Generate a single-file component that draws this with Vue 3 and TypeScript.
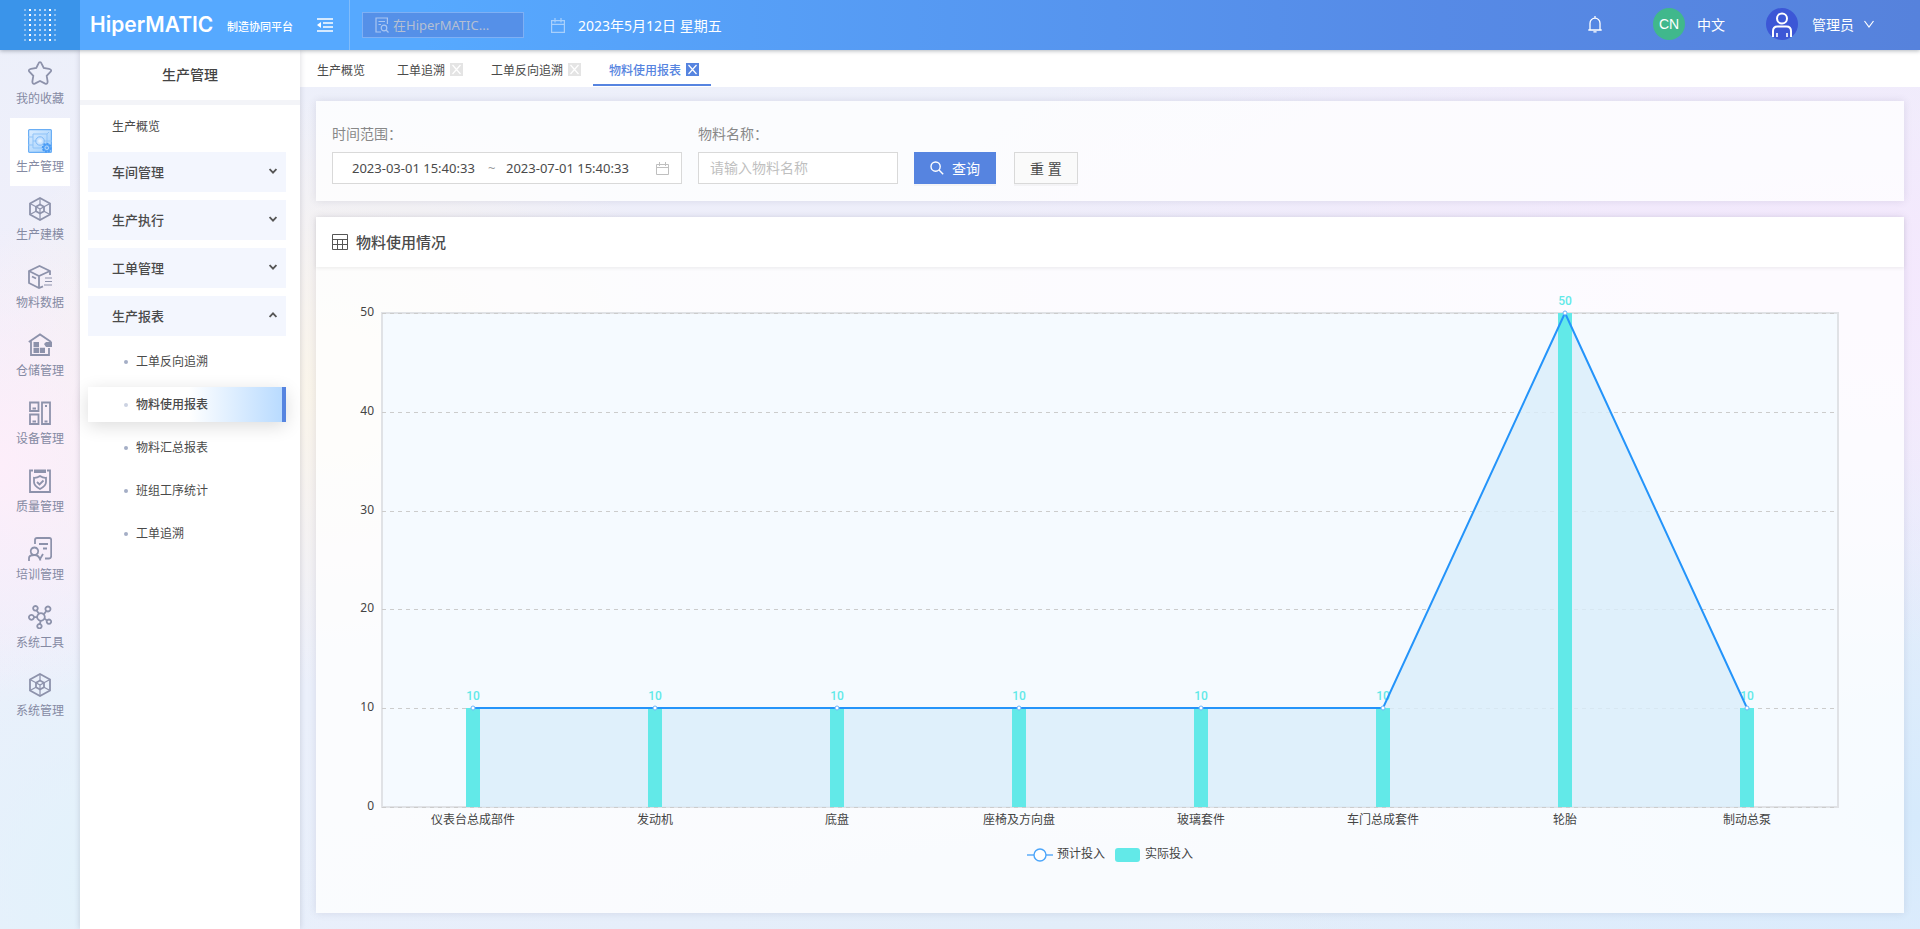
<script setup lang="ts">
import { computed, onBeforeUnmount, onMounted, ref } from 'vue'

interface Stroke {
  d: string
  solid?: boolean
  thin?: boolean
}

interface RailItem {
  label: string
  icon: Stroke[]
}

interface Tab {
  label: string
  closable: boolean
}

const hexCube: Stroke[] = [
  { d: 'M12 1L22 6.5V17.5L12 23L2 17.5V6.5Z' },
  { d: 'M12 7.5L16 9.7V14.3L12 16.5L8 14.3V9.7Z' },
  { d: 'M8 9.7L12 12L16 9.7M12 12V23M12 1V7.5M2 6.5L8 9.7M22 6.5L16 9.7M2 17.5L8 14.3M22 17.5L16 14.3', thin: true },
]

const rail: RailItem[] = [
  { label: '我的收藏', icon: [{ d: 'M12 1.2Q13 1.2 13.6 2.6L15.7 7L21 7.8Q24.4 8.6 22.4 11L18.7 14.8L19.6 20.4Q19.8 23.4 17.2 22.6L12 20L6.8 22.6Q4.2 23.4 4.4 20.4L5.3 14.8L1.6 11Q-.4 8.6 3 7.8L8.3 7L10.4 2.6Q11 1.2 12 1.2Z' }] },
  { label: '生产管理', icon: [] },
  { label: '生产建模', icon: hexCube },
  {
    label: '物料数据',
    icon: [
      { d: 'M15 21.4L11 23L1 18V6L11.5 1L22 6V10' },
      { d: 'M1 6L11 11L22 6M11 11V23M4 11.5L8 13.5' },
      { d: 'M17 13H24M17 16.5H24M16 20H24', thin: true },
    ],
  },
  {
    label: '仓储管理',
    icon: [
      { d: 'M.8 9L12 1.4L23.2 9M3 8V22H21V15' },
      { d: 'M5.5 9H11V14H5.5ZM5.5 14.8H11V20H5.5ZM11.8 14.8H17V20H11.8ZM16 11L18 9H24V14H18Z', solid: true },
    ],
  },
  { label: '设备管理', icon: [{ d: 'M2 1.5H10.5V10H2ZM2 13.5H10.5V23H2ZM14 1.5H22V23H14ZM4.5 7.5H8M4.5 20.5H8M16.5 20.5H19.5M17 5H19' }] },
  {
    label: '质量管理',
    icon: [
      { d: 'M5 1.5H2V23H22V1.5H19' },
      { d: 'M6 .5H18V4H6Z', solid: true },
      { d: 'M12 7Q15 9 18 8.8V13Q18 17 12 20Q6 17 6 13V8.8Q9 9 12 7ZM9 13L11.5 15.5L15.5 11.5' },
    ],
  },
  {
    label: '培训管理',
    icon: [
      { d: 'M7 7V3Q7 1 9 1H21.5Q23.2 1 23.2 3V19Q23.2 21.5 21 21.5H17' },
      { d: 'M11 7H20M15 11.5H19M6.5 10.5A3.8 3.8 0 1 1 6.4 10.5ZM1 24V21Q1 18 6.5 18Q11 18 12.5 23.5M12 22L15 17' },
    ],
  },
  {
    label: '系统工具',
    icon: [
      { d: 'M13 8.2A3.8 3.8 0 1 1 12.9 8.2ZM7.5 1A2.3 2.3 0 1 1 7.4 1ZM20 1.5A2.5 2.5 0 1 1 19.9 1.5ZM3.5 9.8A2.5 2.5 0 1 1 3.4 9.8ZM21 14.5A2.2 2.2 0 1 1 20.9 14.5ZM11.5 19A2.2 2.2 0 1 1 11.4 19Z' },
      { d: 'M8.5 5.3L11 8.8M18.3 6L15.8 9.4M6 12.2H9.2M16.5 13.6L19 15.5M12.5 15.8L12 19' },
    ],
  },
  { label: '系统管理', icon: hexCube },
]

const groups = ['车间管理', '生产执行', '工单管理', '生产报表']
const reports = ['工单反向追溯', '物料使用报表', '物料汇总报表', '班组工序统计', '工单追溯']
const tabs: Tab[] = [
  { label: '生产概览', closable: false },
  { label: '工单追溯', closable: true },
  { label: '工单反向追溯', closable: true },
  { label: '物料使用报表', closable: true },
]

const activeRail = ref('生产管理')
const openGroup = ref('生产报表')
const activeReport = ref('物料使用报表')
const activeTab = ref('物料使用报表')

const dateFrom = ref('2023-03-01 15:40:33')
const dateTo = ref('2023-07-01 15:40:33')
const material = ref('')

function resetFilters(): void {
  material.value = ''
}

const dotColumns = [0.4, 1, 0.6, 0.6, 0.6, 1, 0.4]

const usage = [
  { name: '仪表台总成部件', value: 10 },
  { name: '发动机', value: 10 },
  { name: '底盘', value: 10 },
  { name: '座椅及方向盘', value: 10 },
  { name: '玻璃套件', value: 10 },
  { name: '车门总成套件', value: 10 },
  { name: '轮胎', value: 50 },
  { name: '制动总泵', value: 10 },
]
const ticks = [0, 10, 20, 30, 40, 50]
const maxValue = 50

const chartBox = ref<HTMLElement | null>(null)
const width = ref(1588)
const height = ref(646)
let observer: ResizeObserver | undefined

onMounted(() => {
  if (!chartBox.value) return
  observer = new ResizeObserver(([entry]) => {
    width.value = Math.round(entry.contentRect.width)
    height.value = Math.round(entry.contentRect.height)
  })
  observer.observe(chartBox.value)
})
onBeforeUnmount(() => observer?.disconnect())

const plot = computed(() => ({
  left: 66,
  top: 46,
  right: width.value - 66,
  bottom: height.value - 106,
}))

function yOf(value: number): number {
  const { top, bottom } = plot.value
  return Math.round(bottom - ((bottom - top) * value) / maxValue)
}

const points = computed(() => {
  const { left, right } = plot.value
  const step = (right - left) / usage.length
  return usage.map((u, i) => ({ ...u, x: Math.round(left + step * (i + 0.5)), y: yOf(u.value) }))
})

const linePoints = computed(() => points.value.map((p) => `${p.x},${p.y}`).join(' '))
const areaPoints = computed(() => {
  const first = points.value[0]
  const last = points.value[points.value.length - 1]
  const base = plot.value.bottom
  return `${first.x},${base} ${linePoints.value} ${last.x},${base}`
})
const middle = computed(() => Math.round(width.value / 2))
</script>

<template>
  <div class="app">
    <header class="topbar">
      <div class="brand-mark">
        <svg width="34" height="34" viewBox="0 0 34 34" aria-hidden="true">
          <template v-for="(shade, c) in dotColumns" :key="c">
            <rect v-for="r in 7" :key="r" :x="1 + c * 5" :y="r * 5 - 4" width="2" height="2" fill="#fff" :opacity="shade" />
          </template>
        </svg>
      </div>
      <div class="brand">
        <span class="brand-name">HiperMATIC</span>
        <span class="brand-sub">制造协同平台</span>
      </div>
      <button class="collapse" type="button" aria-label="收起菜单">
        <svg width="16" height="14" viewBox="0 0 16 14" fill="none" stroke="#fff">
          <path d="M0 1H16M6 5H16M6 9H16M0 13H16" stroke-width="1.4" />
          <path d="M4 4V10L0 7Z" fill="#fff" stroke="none" />
        </svg>
      </button>
      <label class="search">
        <svg width="14" height="16" viewBox="0 0 14 16" fill="none" stroke="#a9c6f2" stroke-width="1.2">
          <path d="M12.4 7V1H1V15H6M3.5 4.5H10M3.5 7.5H6" />
          <circle cx="9" cy="11" r="2.8" />
          <path d="M11 13L13.5 15.5" />
        </svg>
        <input type="search" placeholder="在HiperMATIC..." aria-label="搜索" />
      </label>
      <div class="today">
        <svg width="14" height="15" viewBox="0 0 14 15" fill="none" stroke="#a8d0fc" stroke-width="1.2">
          <path d="M.6 2.6H13.4V14.4H.6ZM.6 6.4H13.4M4 0V4.6M10 0V4.6" />
        </svg>
        <span>2023年5月12日 星期五</span>
      </div>
      <div class="account">
        <button class="bell" type="button" aria-label="通知">
          <svg width="14" height="17" viewBox="0 0 14 17" fill="none" stroke="#fff" stroke-width="1.3">
            <path d="M.3 14H13.7M2 14V7.2A5 5 0 0 1 12 7.2V14M7 0V2.2M5.4 15.8H8.6" />
          </svg>
        </button>
        <button class="lang" type="button">
          <span class="lang-badge">CN</span>
          <span>中文</span>
        </button>
        <button class="user" type="button">
          <svg width="32" height="32" viewBox="0 0 32 32" fill="none" stroke="#fff" stroke-width="2">
            <circle cx="16" cy="16" r="16" fill="#3c57d6" stroke="none" />
            <circle cx="16" cy="10.5" r="5" />
            <path d="M7 29V23Q7 18.4 11.5 18.4H20.5Q25 18.4 25 23V29" />
            <path d="M11 25V29M21 25V29" stroke-width="1.6" />
          </svg>
          <span>管理员</span>
          <svg width="10" height="8" viewBox="0 0 10 8" fill="none" stroke="#fff" stroke-width="1.2">
            <path d="M.5 1L5 7L9.5 1" />
          </svg>
        </button>
      </div>
    </header>

    <div class="body">
      <nav class="rail" aria-label="主菜单">
        <a
          v-for="item in rail"
          :key="item.label"
          href="#"
          class="rail-item"
          :class="{ active: item.label === activeRail }"
          @click.prevent="activeRail = item.label"
        >
          <svg v-if="item.icon.length" class="rail-icon" viewBox="0 0 24 24" aria-hidden="true">
            <path v-for="(s, i) in item.icon" :key="i" :d="s.d" :class="{ solid: s.solid, thin: s.thin }" />
          </svg>
          <svg v-else width="24" height="24" viewBox="0 0 24 24" fill="none" aria-hidden="true">
            <defs>
              <linearGradient id="plan" x1="0" y1="0" x2="1" y2="1">
                <stop offset="0" stop-color="#dcedff" />
                <stop offset="1" stop-color="#9ccdfc" />
              </linearGradient>
            </defs>
            <rect x=".6" y=".6" width="22.8" height="22.8" rx="1" fill="url(#plan)" stroke="#6aaef5" stroke-width="1.2" />
            <path d="M5 5H19V19H5ZM0 8H5M0 16H5M5 12H8M16 12H24M19 5L21 3" stroke="#8fc3f8" />
            <circle cx="12" cy="12" r="4.2" fill="#c9e3ff" stroke="#7db8f7" />
            <circle cx="12" cy="12" r="1.8" fill="#e5f2ff" />
            <circle cx="18.8" cy="18.8" r="4" fill="#5ba6f6" stroke="#4a9bf5" stroke-width="2" stroke-dasharray="2 1" />
            <circle cx="18.8" cy="18.8" r="1.8" stroke="#b5d9ff" />
          </svg>
          <span>{{ item.label }}</span>
        </a>
      </nav>

      <aside class="panel">
        <h1 class="panel-title">生产管理</h1>
        <nav class="menu" aria-label="生产管理">
          <a class="menu-link" href="#" @click.prevent>生产概览</a>
          <button
            v-for="g in groups"
            :key="g"
            class="menu-group"
            type="button"
            :aria-expanded="g === openGroup"
            @click="openGroup = g"
          >
            <span>{{ g }}</span>
            <svg width="8" height="6" viewBox="0 0 8 6" fill="none" stroke="#555" stroke-width="1.8">
              <path :d="g === openGroup ? 'M.6 5L4 1.4L7.4 5' : 'M.6 1L4 4.6L7.4 1'" />
            </svg>
          </button>
          <a
            v-for="r in reports"
            :key="r"
            href="#"
            class="menu-leaf"
            :class="{ active: r === activeReport }"
            @click.prevent="activeReport = r"
          >{{ r }}</a>
        </nav>
      </aside>

      <div class="content">
        <div class="tabs">
          <div v-for="t in tabs" :key="t.label" class="tab" :class="{ active: t.label === activeTab, plain: !t.closable }">
            <button class="tab-name" type="button" @click="activeTab = t.label">{{ t.label }}</button>
            <button v-if="t.closable" class="tab-close" type="button" :aria-label="'关闭' + t.label">
              <svg width="13" height="13" viewBox="0 0 13 13" stroke="#fff" stroke-width="1.2"><path d="M2.5 2L10.5 11M10.5 2L2.5 11" /></svg>
            </button>
          </div>
        </div>

        <main class="main">
          <form class="card filters" @submit.prevent>
            <div class="field range">
              <label for="date-from">时间范围：</label>
              <div class="range-box">
                <input id="date-from" v-model="dateFrom" type="text" />
                <span class="tilde">~</span>
                <input v-model="dateTo" type="text" aria-label="结束时间" />
                <svg width="13" height="13" viewBox="0 0 13 13" fill="none" stroke="#bfbfbf">
                  <path d="M.5 2.5H12.5V12.5H.5ZM.5 5.5H12.5M3.5 0V4M9.5 0V4" />
                </svg>
              </div>
            </div>
            <div class="field">
              <label for="material">物料名称：</label>
              <input id="material" v-model="material" class="text-box" type="text" placeholder="请输入物料名称" />
            </div>
            <div class="actions">
              <button class="btn primary" type="submit">
                <svg width="14" height="14" viewBox="0 0 14 14" fill="none" stroke="#fff" stroke-width="1.4">
                  <circle cx="5.6" cy="5.6" r="4.6" /><path d="M9 9L13.2 13.2" />
                </svg>
                <span>查询</span>
              </button>
              <button class="btn" type="button" @click="resetFilters">重 置</button>
            </div>
          </form>

          <section class="card report">
            <h2 class="report-title">
              <svg width="16" height="16" viewBox="0 0 16 16" fill="none" stroke="#555">
                <path d="M.5 .5H15.5V15.5H.5ZM.5 5.5H15.5M.5 10.5H15.5M5.5 5.5V15.5M10.5 5.5V15.5" />
              </svg>
              <span>物料使用情况</span>
            </h2>
            <div ref="chartBox" class="chart-box">
              <svg class="chart" :viewBox="`0 0 ${width} ${height}`" role="img" aria-label="物料使用情况">
                <rect
                  :x="plot.left" :y="plot.top" :width="plot.right - plot.left" :height="plot.bottom - plot.top"
                  fill="#f5faff" stroke="#e0e2e6" stroke-width="2"
                />
                <g v-for="t in ticks" :key="t">
                  <line :x1="plot.left" :x2="plot.right" :y1="yOf(t) + 0.5" :y2="yOf(t) + 0.5" class="grid" />
                  <text :x="plot.left - 8" :y="yOf(t) + 3" text-anchor="end" class="axis">{{ t }}</text>
                </g>
                <polygon :points="areaPoints" fill="#d9edfa" fill-opacity=".8" />
                <g v-for="p in points" :key="p.name">
                  <rect :x="p.x - 7" :y="p.y" width="14" :height="plot.bottom - p.y" fill="#62e9e8" />
                  <text :x="p.x" :y="p.y - 8" text-anchor="middle" class="value">{{ p.value }}</text>
                  <text :x="p.x" :y="plot.bottom + 17" text-anchor="middle" class="axis">{{ p.name }}</text>
                </g>
                <polyline :points="linePoints" fill="none" stroke="#2494fa" stroke-width="2" />
                <circle v-for="p in points" :key="p.name" :cx="p.x" :cy="p.y" r="2" fill="#fff" stroke="#6db5fa" />
                <g>
                  <line :x1="middle - 83" :x2="middle - 57" :y1="height - 58" :y2="height - 58" stroke="#84c0fa" stroke-width="2" />
                  <circle :cx="middle - 70" :cy="height - 58" r="6" fill="#fff" stroke="#4ba5fa" stroke-width="1.4" />
                  <text :x="middle - 53" :y="height - 55" class="axis">预计投入</text>
                  <rect :x="middle + 5" :y="height - 65" width="25" height="14" rx="3" fill="#62e9e8" />
                  <text :x="middle + 35" :y="height - 55" class="axis">实际投入</text>
                </g>
              </svg>
            </div>
          </section>
        </main>
      </div>
    </div>
  </div>
</template>

<style>
body {
  margin: 0;
}
</style>

<style scoped>
.app {
  display: flex;
  flex-direction: column;
  min-height: 100vh;
  box-sizing: border-box;
  font-family: 'Noto Sans', 'Noto Sans CJK SC', sans-serif;
  font-size: 12px;
  color: #4a4a4a;
  background:
    radial-gradient(ellipse 10% 26% at 0% 50%, #fdeefa 0%, transparent 100%),
    radial-gradient(ellipse 20% 32% at 17% 42%, #faf5ea 0%, transparent 100%),
    radial-gradient(ellipse 50% 40% at 97% 30%, #f4e8fd 0%, transparent 100%),
    radial-gradient(ellipse 40% 45% at 100% 88%, #d6eafc 0%, transparent 100%),
    radial-gradient(ellipse 12% 30% at 5% 95%, #e2f2fb 0%, transparent 100%),
    radial-gradient(ellipse 40% 25% at 55% 100%, #e2edf9 0%, transparent 100%),
    linear-gradient(180deg, #ecf0fa 0%, #f1eefb 45%, #ebf0fb 75%, #e9effb 100%);
}

button,
input {
  font: inherit;
  color: inherit;
  background: none;
  border: 0;
  padding: 0;
  margin: 0;
  min-width: 0;
  outline: none;
}

button {
  cursor: pointer;
}

a {
  color: inherit;
  text-decoration: none;
}

svg {
  display: block;
  flex: none;
}

.topbar {
  display: flex;
  align-items: stretch;
  height: 50px;
  color: #fff;
  font-size: 14px;
  background: linear-gradient(90deg, #56a9ff 0%, #56a9ff 22%, #568ae6 75%, #5682dc 100%);
  box-shadow: 0 1px 4px rgba(0, 21, 41, 0.3);
  position: relative;
  z-index: 2;
}

.brand-mark {
  width: 80px;
  display: flex;
  align-items: center;
  justify-content: center;
  background: #3a94ea;
}

.brand {
  width: 220px;
  box-sizing: border-box;
  padding: 0 7px 0 10px;
  display: flex;
  align-items: center;
  justify-content: space-between;
  white-space: nowrap;
}

.brand-name {
  font-family: Inter, sans-serif;
  font-size: 21px;
  font-weight: 600;
  line-height: 24px;
}

.brand-sub {
  font-size: 11px;
  font-weight: 500;
  line-height: 16px;
  padding-top: 4px;
}

.collapse {
  width: 50px;
  display: flex;
  align-items: center;
  justify-content: center;
  border-right: 1px solid #80bcfb;
}

.search {
  align-self: center;
  display: flex;
  align-items: center;
  gap: 4px;
  width: 162px;
  height: 26px;
  box-sizing: border-box;
  margin-left: 12px;
  padding: 0 12px;
  background: #5590e8;
  border: 1px solid #7fb0f4;
}

.search input {
  flex: 1;
  font-size: 13px;
}

.search input::placeholder {
  color: #b4bfd2;
  opacity: 1;
}

.today {
  display: flex;
  align-items: center;
  gap: 13px;
  margin-left: 27px;
}

.account {
  display: flex;
  align-items: center;
  margin: 0 46px 2px auto;
}

.bell {
  margin-right: 51px;
}

.lang,
.user {
  display: flex;
  align-items: center;
  gap: 12px;
}

.lang {
  margin-right: 41px;
}

.user {
  gap: 14px;
}

.user svg:last-child {
  margin-left: -4px;
}

.lang-badge {
  width: 32px;
  height: 32px;
  line-height: 32px;
  border-radius: 50%;
  text-align: center;
  font-family: 'Liberation Sans', sans-serif;
  background: #40b88c;
}

.body {
  flex: 1;
  display: flex;
}

.rail {
  width: 80px;
  flex: none;
}

.rail-item {
  display: flex;
  flex-direction: column;
  align-items: center;
  gap: 5px;
  height: 68px;
  box-sizing: border-box;
  margin: 0 10px;
  padding-top: 11px;
  line-height: 18px;
  color: #858aa3;
}

.rail-item.active {
  background: #fff;
}

.rail-icon {
  width: 24px;
  height: 24px;
}

.rail-icon path {
  fill: none;
  stroke: #8d92ab;
  stroke-width: 1.8;
}

.rail-icon path.thin {
  stroke-width: 1.2;
}

.rail-icon path.solid {
  fill: #8d92ab;
  stroke: none;
}

.panel {
  width: 220px;
  flex: none;
  background: #fff;
  box-shadow: 0 0 6px rgba(60, 60, 90, 0.2);
  position: relative;
  z-index: 1;
}

.panel-title {
  margin: 0;
  height: 50px;
  line-height: 50px;
  border-bottom: 5px solid #f3f4f8;
  text-align: center;
  font-size: 14px;
  font-weight: 500;
  color: #444;
}

.menu {
  display: flex;
  flex-direction: column;
  gap: 8px;
  padding: 4px 14px 16px 8px;
}

.menu-link,
.menu-leaf {
  height: 35px;
  line-height: 35px;
}

.menu-link {
  padding-left: 24px;
}

.menu-group {
  display: flex;
  align-items: center;
  justify-content: space-between;
  height: 40px;
  padding: 0 9px 2px 24px;
  font-size: 13px;
  font-weight: 500;
  background: #f3f6fe;
}

.menu-leaf {
  display: flex;
  align-items: center;
  gap: 8px;
  padding-left: 36px;
}

.menu-leaf::before {
  content: '';
  width: 4px;
  height: 4px;
  border-radius: 50%;
  background: #a4aec6;
}

.menu-leaf.active {
  font-weight: 500;
  background: linear-gradient(90deg, #fff 52%, #b9dbff 100%);
  border-right: 4px solid #5684e0;
  box-shadow: 0 4px 18px rgba(0, 0, 0, 0.14);
}

.menu-leaf.active::before {
  background: #ccd2e2;
}

.content {
  flex: 1;
  min-width: 0;
  display: flex;
  flex-direction: column;
}

.tabs {
  display: flex;
  height: 37px;
  box-sizing: border-box;
  padding: 5px 0 1px 1px;
  background: #fff;
}

.tab {
  display: flex;
  align-items: center;
  gap: 5px;
  padding: 0 12px 0 16px;
  border-bottom: 2px solid transparent;
}

.tab.plain {
  padding-right: 16px;
}

.tab-close {
  background: #e4e4e4;
}

.tab.active {
  color: #5684e0;
  font-weight: 500;
  border-bottom-color: #5684e0;
}

.tab.active .tab-close {
  background: #5684e0;
}

.main {
  flex: 1;
  display: flex;
  flex-direction: column;
  gap: 16px;
  padding: 14px 16px 16px;
}

.card {
  background: rgba(255, 255, 255, 0.78);
  box-shadow: 0 0 8px rgba(60, 60, 90, 0.12);
}

.filters {
  display: flex;
  flex-wrap: wrap;
  align-items: flex-end;
  gap: 16px;
  padding: 22px 16px 17px;
  font-size: 14px;
}

.field {
  display: flex;
  flex-direction: column;
  gap: 7px;
  width: 200px;
}

.field.range {
  width: 350px;
}

.field label {
  line-height: 22px;
  color: #888;
}

.range-box,
.text-box {
  height: 32px;
  box-sizing: border-box;
  background: #fff;
  border: 1px solid #d9d9d9;
}

.range-box {
  display: flex;
  align-items: center;
  padding: 0 12px 0 19px;
  font-size: 13px;
}

.range-box input {
  flex: 0 1 136px;
}

.range-box svg {
  margin-left: auto;
}

.tilde {
  width: 18px;
  color: #999;
}

.text-box {
  padding: 0 11px 2px;
}

.text-box::placeholder {
  color: #bfbfbf;
  opacity: 1;
}

.actions {
  display: flex;
  gap: 18px;
}

.btn {
  display: flex;
  align-items: center;
  gap: 8px;
  height: 32px;
  box-sizing: border-box;
  padding: 0 15px;
  background: #fafafa;
  border: 1px solid #d9d9d9;
  box-shadow: 0 2px 0 rgba(0, 0, 0, 0.03);
}

.btn.primary {
  color: #fff;
  background: #5684e0;
  border-color: #5684e0;
}

.report {
  flex: 1;
  display: flex;
  flex-direction: column;
}

.report-title {
  display: flex;
  align-items: center;
  gap: 8px;
  height: 50px;
  box-sizing: border-box;
  margin: 0;
  padding: 0 16px 1px;
  font-size: 15px;
  font-weight: 500;
  background: #fff;
  box-shadow: 0 1px 4px rgba(0, 0, 0, 0.08);
}

.chart-box {
  flex: 1;
  min-height: 360px;
  position: relative;
}

.chart {
  position: absolute;
  inset: 0;
  width: 100%;
  height: 100%;
}

.grid {
  stroke: #ccc;
  stroke-dasharray: 4 4;
}

.axis {
  font-size: 12px;
  fill: #444;
}

.value {
  font-family: Roboto, sans-serif;
  font-size: 12px;
  font-weight: 500;
  fill: #62e9e8;
}
</style>
